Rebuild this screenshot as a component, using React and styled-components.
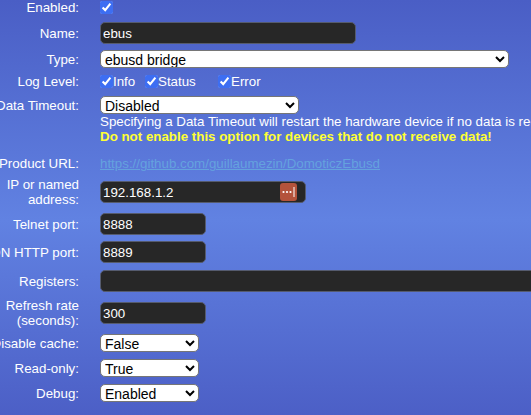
import React from 'react';
import styled, { createGlobalStyle } from 'styled-components';

const GlobalStyle = createGlobalStyle`
  html, body {
    margin: 0;
    height: 100%;
    overflow: hidden;
  }

  body {
    background: linear-gradient(180deg, #4a5ec5 0%, #6182e2 53%, #4c5fc6 100%);
    color: #fff;
    font-family: "Liberation Sans", Arial, sans-serif;
    font-size: 13.33px;
  }
`;

const Form = styled.form`
  display: flex;
  flex-direction: column;
  height: 415px;
  width: 531px;
  overflow: hidden;
`;

const Row = styled.div`
  align-items: center;
  display: grid;
  grid-template-columns: 79px 1fr;
  column-gap: 21px;
  margin-top: ${({ $top }) => $top || 0}px;
  white-space: nowrap;
`;

const Label = styled.label`
  display: flex;
  justify-content: flex-end;
  line-height: 15px;
  text-align: right;
  white-space: ${({ $wrap }) => ($wrap ? 'normal' : 'nowrap')};
`;

const Value = styled.div`
  align-items: center;
  display: flex;
  min-width: 0;
`;

const Check = styled.input.attrs({ type: 'checkbox' })`
  accent-color: #3d6ef2;
  flex: none;
  height: 13px;
  margin: 0;
  width: 13px;
`;

const CheckOption = styled.span`
  align-items: center;
  display: flex;
  width: ${({ $width }) => $width}px;
`;

const TextInput = styled.input.attrs({ type: 'text', readOnly: true })`
  background: #272727;
  border: 1px solid #555b6e;
  border-radius: 5px;
  box-sizing: border-box;
  color: #fff;
  display: block;
  flex: none;
  font: 13.33px "Liberation Sans", Arial, sans-serif;
  height: 22px;
  padding: 0 2px;
  width: ${({ $width }) => $width}px;
`;

const Select = styled.select`
  background-color: #fff;
  border: 1px solid #767676;
  border-radius: 5px;
  box-sizing: border-box;
  color: #000;
  flex: none;
  font: 14px "Liberation Sans", Arial, sans-serif;
  height: 18px;
  padding: 0;
  width: ${({ $width }) => $width}px;
`;

const Hint = styled.div`
  line-height: 15px;
  margin-left: 100px;
  white-space: nowrap;
`;

const Warning = styled(Hint)`
  color: #ffff33;
  font-weight: bold;
`;

const ProductLink = styled.a`
  color: #64a2de;
  line-height: 15px;
  text-decoration: underline;
`;

const PasswordField = styled.div`
  display: flex;
  flex: none;
  position: relative;
`;

const ManagerButton = styled.span`
  align-items: center;
  background: #b4533b;
  border-radius: 3px;
  display: flex;
  height: 18px;
  justify-content: center;
  position: absolute;
  right: 9px;
  top: 2px;
  width: 17px;
`;

const ManagerIcon = () => (
  <svg width="15" height="10" viewBox="0 0 15 10">
    <circle cx="2.5" cy="5" r="1.1" fill="#fff" />
    <circle cx="6" cy="5" r="1.1" fill="#fff" />
    <circle cx="9.5" cy="5" r="1.1" fill="#fff" />
    <rect x="12.5" y="0" width="1" height="10" fill="#fff" />
  </svg>
);

const App = () => (
  <>
    <GlobalStyle />
    <Form>
      <Row>
        <Label>Enabled:</Label>
        <Value>
          <Check defaultChecked />
        </Value>
      </Row>
      <Row $top={7}>
        <Label>Name:</Label>
        <Value>
          <TextInput $width={256} defaultValue="ebus" />
        </Value>
      </Row>
      <Row $top={6}>
        <Label>Type:</Label>
        <Value>
          <Select $width={409} defaultValue="ebusd bridge">
            <option>ebusd bridge</option>
          </Select>
        </Value>
      </Row>
      <Row $top={6}>
        <Label>Log Level:</Label>
        <Value>
          <CheckOption $width={45}>
            <Check defaultChecked />
            Info
          </CheckOption>
          <CheckOption $width={73}>
            <Check defaultChecked />
            Status
          </CheckOption>
          <CheckOption>
            <Check defaultChecked />
            Error
          </CheckOption>
        </Value>
      </Row>
      <Row $top={7}>
        <Label>Data Timeout:</Label>
        <Value>
          <Select $width={199} defaultValue="Disabled">
            <option>Disabled</option>
          </Select>
        </Value>
      </Row>
      <Hint>
        Specifying a Data Timeout will restart the hardware device if no data is received within the
        specified time.
      </Hint>
      <Warning>Do not enable this option for devices that do not receive data!</Warning>
      <Row $top={12}>
        <Label>Product URL:</Label>
        <Value>
          <ProductLink href="#">https://github.com/guillaumezin/DomoticzEbusd</ProductLink>
        </Value>
      </Row>
      <Row $top={6}>
        <Label $wrap>IP or named address:</Label>
        <Value>
          <PasswordField>
            <TextInput $width={206} defaultValue="192.168.1.2" />
            <ManagerButton>
              <ManagerIcon />
            </ManagerButton>
          </PasswordField>
        </Value>
      </Row>
      <Row $top={6}>
        <Label>Telnet port:</Label>
        <Value>
          <TextInput $width={106} defaultValue="8888" />
        </Value>
      </Row>
      <Row $top={6}>
        <Label>JSON HTTP port:</Label>
        <Value>
          <TextInput $width={106} defaultValue="8889" />
        </Value>
      </Row>
      <Row $top={7}>
        <Label>Registers:</Label>
        <Value>
          <TextInput $width={600} defaultValue="" />
        </Value>
      </Row>
      <Row $top={6}>
        <Label $wrap>Refresh rate (seconds):</Label>
        <Value>
          <TextInput $width={106} defaultValue="300" />
        </Value>
      </Row>
      <Row $top={6}>
        <Label>Disable cache:</Label>
        <Value>
          <Select $width={99} defaultValue="False">
            <option>False</option>
            <option>True</option>
          </Select>
        </Value>
      </Row>
      <Row $top={7}>
        <Label>Read-only:</Label>
        <Value>
          <Select $width={99} defaultValue="True">
            <option>False</option>
            <option>True</option>
          </Select>
        </Value>
      </Row>
      <Row $top={7}>
        <Label>Debug:</Label>
        <Value>
          <Select $width={99} defaultValue="Enabled">
            <option>Disabled</option>
            <option>Enabled</option>
          </Select>
        </Value>
      </Row>
    </Form>
  </>
);

export default App;
